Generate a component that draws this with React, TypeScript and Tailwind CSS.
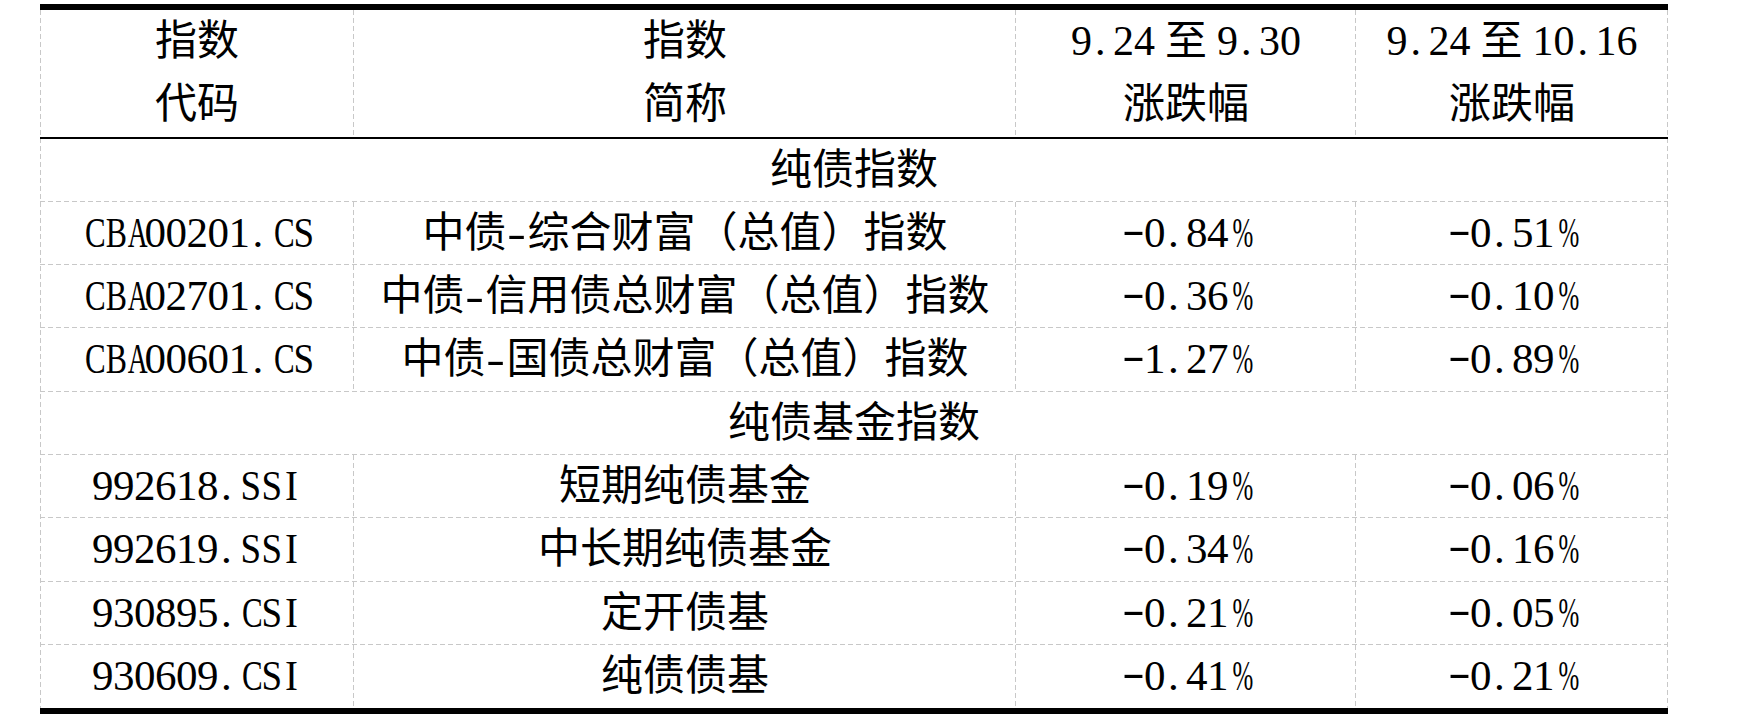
import React from "react";

const DASH_H =
  "bg-[image:repeating-linear-gradient(to_right,#c8c8c8_0_5px,transparent_5px_8px)] bg-[length:100%_1px] bg-[position:left_bottom] bg-no-repeat";
const DASH_V =
  "bg-[image:repeating-linear-gradient(to_bottom,#c8c8c8_0_5px,transparent_5px_8px)] bg-[length:1px_100%] bg-[position:right_top] bg-no-repeat";
const DASH_SIDES =
  "bg-[image:repeating-linear-gradient(to_bottom,#c8c8c8_0_5px,transparent_5px_8px),repeating-linear-gradient(to_bottom,#c8c8c8_0_5px,transparent_5px_8px)] bg-[length:1px_100%,1px_100%] bg-[position:left_top,right_top] bg-no-repeat";

const LETTER: Record<string, string> = {
  C: "scale-x-[0.72]",
  B: "scale-x-[0.74]",
  A: "scale-x-[0.64]",
  S: "scale-x-[0.86]",
  I: "scale-x-[0.9]",
};

function Txt({ s, big = true, num = false }: { s: string; big?: boolean; num?: boolean }) {
  const out: React.ReactNode[] = [];
  for (let i = 0; i < s.length; i++) {
    const c = s[i];
    if (c.charCodeAt(0) < 128) {
      let cls = "inline-block w-[21px] leading-none font-['Liberation_Serif',serif] ";
      cls += big ? "text-[43px] " : "text-[42px] ";
      if (c === ".") cls += "text-left pl-[3px]";
      else if (c === "%") cls += "text-center scale-x-[0.58]";
      else if (c === "-") cls += num ? "text-center scale-x-[1.6] -translate-y-[4px]" : "text-center scale-x-[1.3]";
      else if (LETTER[c]) cls += "text-center " + LETTER[c];
      else cls += "text-center";
      out.push(
        <span key={i} className={cls}>
          {c}
        </span>
      );
    } else {
      out.push(<span key={i}>{c}</span>);
    }
  }
  return <>{out}</>;
}

function DateHead({ a, b }: { a: string; b: string }) {
  return (
    <span className="whitespace-nowrap">
      <Txt s={a} big={false} />
      <span className="mx-[10px]">至</span>
      <Txt s={b} big={false} />
    </span>
  );
}

type Row = { group: string } | { cells: [string, string, string, string] };

const rows: Row[] = [
  { group: "纯债指数" },
  { cells: ["CBA00201.CS", "中债-综合财富（总值）指数", "-0.84%", "-0.51%"] },
  { cells: ["CBA02701.CS", "中债-信用债总财富（总值）指数", "-0.36%", "-0.10%"] },
  { cells: ["CBA00601.CS", "中债-国债总财富（总值）指数", "-1.27%", "-0.89%"] },
  { group: "纯债基金指数" },
  { cells: ["992618.SSI", "短期纯债基金", "-0.19%", "-0.06%"] },
  { cells: ["992619.SSI", "中长期纯债基金", "-0.34%", "-0.16%"] },
  { cells: ["930895.CSI", "定开债基", "-0.21%", "-0.05%"] },
  { cells: ["930609.CSI", "纯债债基", "-0.41%", "-0.21%"] },
];

const GRID = "grid grid-cols-[314px_662px_340px_312px]";

export default function App() {
  return (
    <div className="w-[1753px] h-[721px] bg-white overflow-hidden pt-[4px] pl-[40px] text-black font-normal font-['Liberation_Serif','Noto_Sans_CJK_SC',serif] text-[42px]">
      <div className={`w-[1628px] border-y-[6px] border-black ${DASH_SIDES}`}>
        {/* header */}
        <div className={`${GRID} h-[128.5px] border-b-2 border-black`}>
          {[
            [<>指数</>, <>代码</>],
            [<>指数</>, <>简称</>],
            [<DateHead a="9.24" b="9.30" />, <>涨跌幅</>],
            [<DateHead a="9.24" b="10.16" />, <>涨跌幅</>],
          ].map((lines, ci) => (
            <div
              key={ci}
              className={`flex flex-col items-center justify-center ${ci < 3 ? DASH_V : ""}`}
            >
              <div className="leading-[63.25px] whitespace-nowrap">{lines[0]}</div>
              <div className="leading-[63.25px] whitespace-nowrap">{lines[1]}</div>
            </div>
          ))}
        </div>
        {/* body */}
        {rows.map((r, ri) => {
          const last = ri === rows.length - 1;
          if ("group" in r) {
            return (
              <div
                key={ri}
                className={`h-[63.3px] flex items-center justify-center leading-[63.3px] ${last ? "" : DASH_H}`}
              >
                {r.group}
              </div>
            );
          }
          return (
            <div key={ri} className={`${GRID} h-[63.3px] ${last ? "" : DASH_H}`}>
              {r.cells.map((c, ci) => (
                <div
                  key={ci}
                  className={`flex items-center justify-center whitespace-nowrap leading-[63.3px] ${ci < 3 ? DASH_V : ""}`}
                >
                  <span>
                    <Txt s={c} num={ci >= 2} />
                  </span>
                </div>
              ))}
            </div>
          );
        })}
      </div>
    </div>
  );
}
